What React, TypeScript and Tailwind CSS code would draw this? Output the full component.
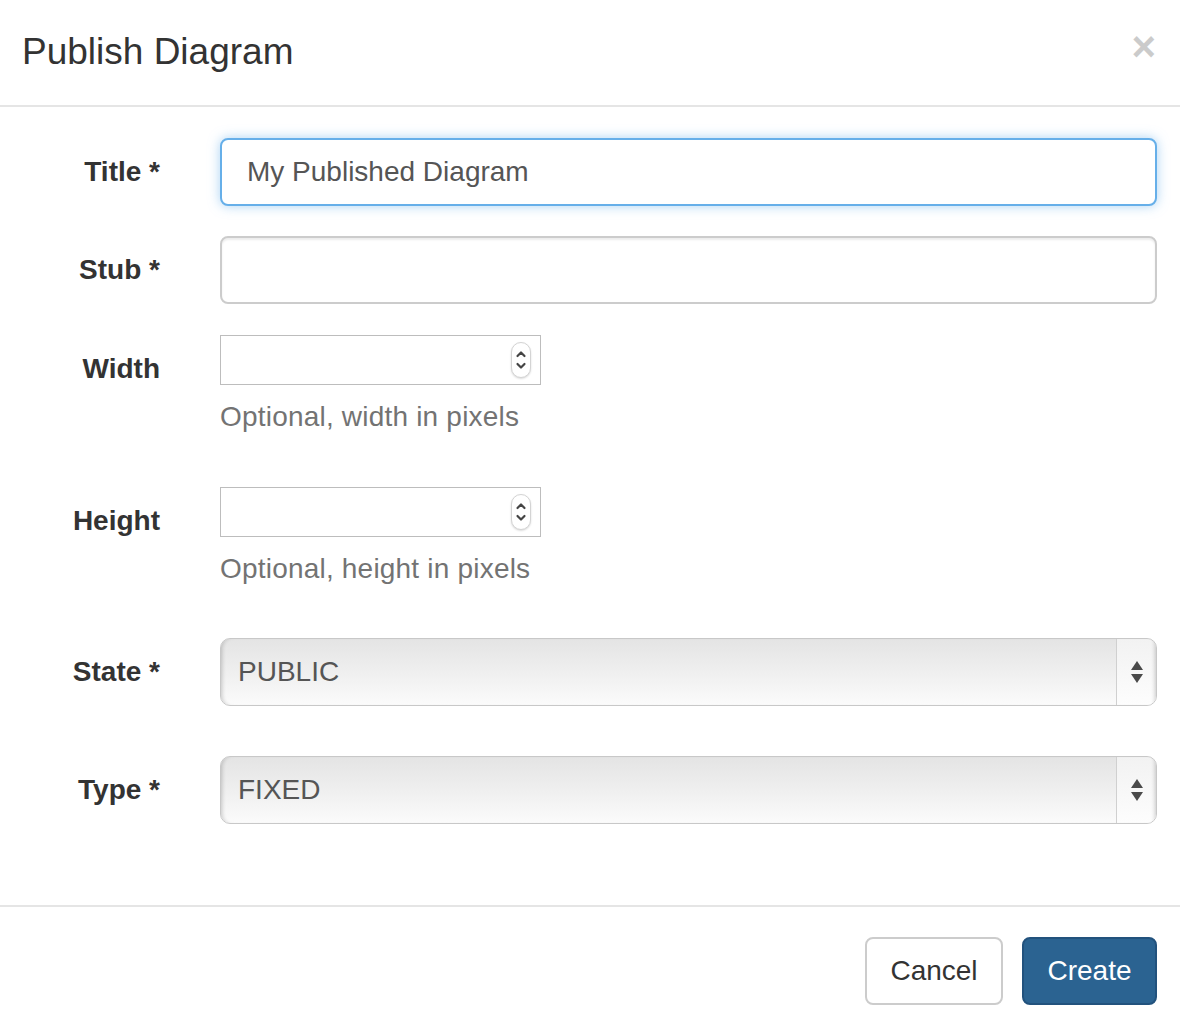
import React from "react";

const font = { fontFamily: '"Liberation Sans", Arial, Helvetica, sans-serif' };

function Label({ children }: { children: React.ReactNode }) {
  return (
    <div className="flex h-[68px] items-center justify-end text-[28px] font-bold text-[#333]">
      {children}
    </div>
  );
}

function Spinner() {
  return (
    <div className="absolute right-[9px] top-[6px] flex h-[36px] w-[20px] flex-col items-center justify-center rounded-full border border-[#d4d4d4] bg-white shadow-[0_1px_2px_rgba(0,0,0,0.15)]">
      <svg width="12" height="28" viewBox="0 0 12 28" fill="none" stroke="#444" strokeWidth="2.2" strokeLinecap="round" strokeLinejoin="round">
        <path d="M2.5 10 6 6.5 9.5 10" />
        <path d="M2.5 18 6 21.5 9.5 18" />
      </svg>
    </div>
  );
}

function NumberField({ help }: { help: string }) {
  return (
    <div>
      <div className="relative h-[50px] w-[321px] border border-[#bdbdbd] bg-white">
        <Spinner />
      </div>
      <p className="mt-[12px] text-[28px] leading-[40px] tracking-[0.2px] text-[#737373]">{help}</p>
    </div>
  );
}

function SelectField({ value }: { value: string }) {
  return (
    <div className="flex h-[68px] overflow-hidden rounded-[10px] border border-[#c8c8c8] bg-gradient-to-b from-[#e4e4e4] via-[#efefef] to-[#fbfbfb] shadow-[inset_4px_0_4px_-3px_rgba(0,0,0,0.2)]">
      <div className="flex flex-1 items-center pl-[17px] text-[28px] text-[#555]">{value}</div>
      <div className="flex w-[40px] items-center justify-center border-l border-[#d0d0d0] bg-gradient-to-b from-[#f2f2f2] to-[#fdfdfd] shadow-[inset_-4px_0_4px_-3px_rgba(0,0,0,0.2)]">
        <svg width="14" height="24" viewBox="0 0 14 24" fill="#4a4a4a">
          <path d="M7 1 13 10H1Z" />
          <path d="M1 14H13L7 23Z" />
        </svg>
      </div>
    </div>
  );
}

export default function App() {
  return (
    <div className="h-[1030px] w-[1180px] overflow-hidden bg-white" style={font}>
      <header className="flex h-[107px] items-start justify-between border-b-2 border-[#e5e5e5] pl-[22px] pr-[24px]">
        <h4 className="pt-[30px] text-[37px] leading-[44px] text-[#333]">Publish Diagram</h4>
        <button className="mt-[23px] text-[42px] font-bold leading-[48px] text-black opacity-20">×</button>
      </header>

      <div className="grid grid-cols-[160px_1fr] gap-x-[60px] pr-[23px] pt-[31px]">
        <Label>Title *</Label>
        <div className="flex h-[68px] items-center rounded-[8px] border-2 border-[#66afe9] bg-white pl-[25px] text-[28px] text-[#555] shadow-[0_0_12px_rgba(102,175,233,0.55)]">
          My Published Diagram
        </div>

        <div className="col-span-2 h-[30px]" />

        <Label>Stub *</Label>
        <div className="h-[68px] rounded-[8px] border-2 border-[#ccc] bg-white shadow-[inset_0_2px_2px_rgba(0,0,0,0.075)]" />

        <div className="col-span-2 h-[31px]" />

        <Label>Width</Label>
        <NumberField help="Optional, width in pixels" />

        <div className="col-span-2 h-[50px]" />

        <Label>Height</Label>
        <NumberField help="Optional, height in pixels" />

        <div className="col-span-2 h-[49px]" />

        <Label>State *</Label>
        <SelectField value="PUBLIC" />

        <div className="col-span-2 h-[50px]" />

        <Label>Type *</Label>
        <SelectField value="FIXED" />
      </div>

      <footer className="mt-[81px] flex justify-end gap-[19px] border-t-2 border-[#e5e5e5] pr-[23px] pt-[30px]">
        <button className="h-[68px] w-[138px] rounded-[8px] border-2 border-[#ccc] bg-white text-[28px] text-[#333]">
          Cancel
        </button>
        <button className="h-[68px] w-[135px] rounded-[8px] border-2 border-[#22527d] bg-[#2b6391] text-[28px] text-white">
          Create
        </button>
      </footer>
    </div>
  );
}
